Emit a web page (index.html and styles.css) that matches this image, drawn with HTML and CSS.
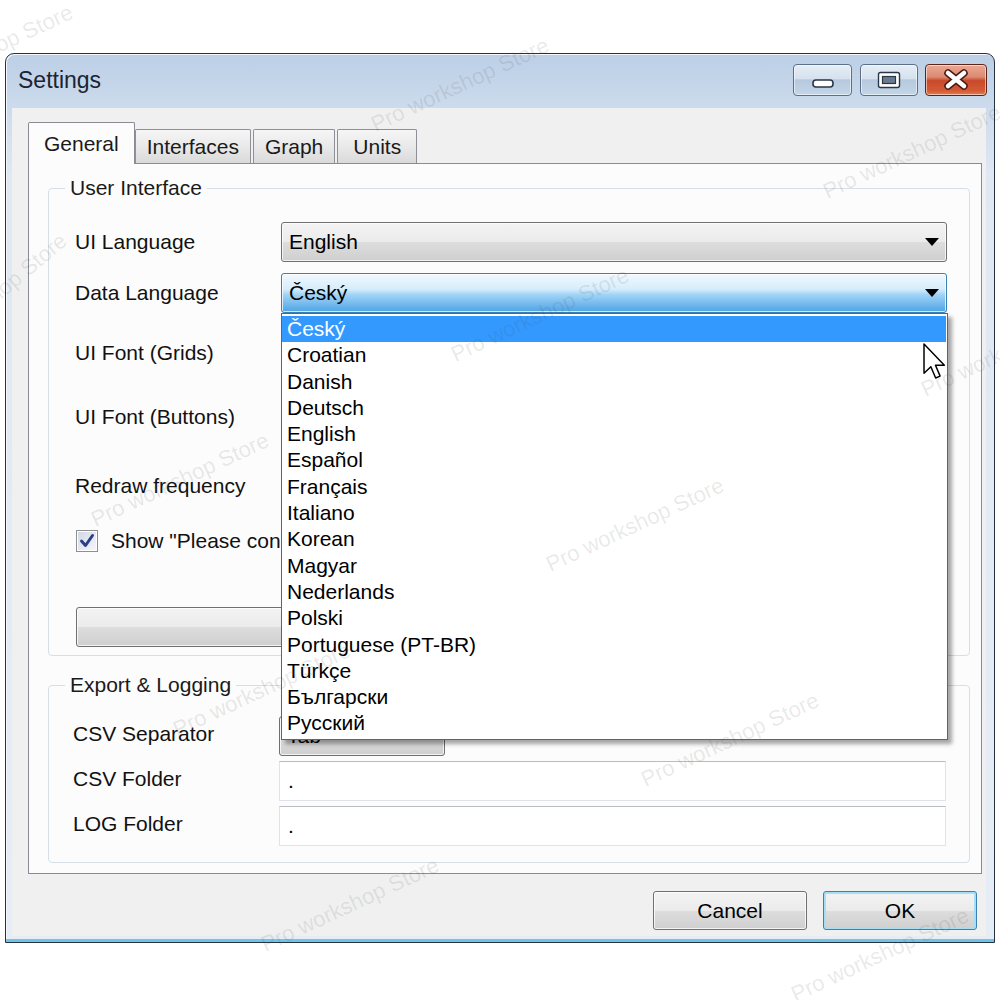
FILE: index.html
```html
<!doctype html>
<html>
<head>
<meta charset="utf-8">
<title>Settings</title>
<link rel="stylesheet" href="styles.css">
</head>
<body>
<div class="window">
	<div class="titlebar">
		<span class="title">Settings</span>
		<div class="caption-btns">
			<span class="cbtn min">
				<svg width="59" height="32" viewBox="0 0 59 32"><rect x="20" y="16" width="20" height="7" rx="3" fill="#fff" stroke="#2a3746" stroke-width="1.6"/></svg>
			</span>
			<span class="cbtn max">
				<svg width="58" height="32" viewBox="0 0 58 32"><rect x="18.5" y="8.5" width="21" height="15" rx="2" fill="#fff" stroke="#2a3746" stroke-width="1.4"/><rect x="22.5" y="12.5" width="13" height="7" fill="#6b7a8c" stroke="#2a3746" stroke-width="1.2"/></svg>
			</span>
			<span class="cbtn close">
				<svg width="62" height="32" viewBox="0 0 62 32"><path d="M23 9 L39 22 M39 9 L23 22" stroke="#4a1a10" stroke-width="7.5" stroke-linecap="round"/><path d="M23 9 L39 22 M39 9 L23 22" stroke="#fff" stroke-width="4.5" stroke-linecap="round"/></svg>
			</span>
		</div>
	</div>
	<div class="client">
		<ul class="tabs">
			<li class="on">General</li>
			<li>Interfaces</li>
			<li>Graph</li>
			<li>Units</li>
		</ul>
		<div class="tabpage">
			<div class="group">
				<div class="legend">User Interface</div>
				<div class="rows ui-rows">
					<div class="row"><label>UI Language</label><div class="combo"><span>English</span><i class="arrow"></i></div></div>
					<div class="row"><label>Data Language</label>
						<div class="cell">
							<div class="combo hot"><span>Český</span><i class="arrow"></i></div>
							<ul class="droplist">
								<li class="sel">Český</li>
								<li>Croatian</li>
								<li>Danish</li>
								<li>Deutsch</li>
								<li>English</li>
								<li>Español</li>
								<li>Français</li>
								<li>Italiano</li>
								<li>Korean</li>
								<li>Magyar</li>
								<li>Nederlands</li>
								<li>Polski</li>
								<li>Portuguese (PT-BR)</li>
								<li>Türkçe</li>
								<li>Български</li>
								<li>Русский</li>
							</ul>
							<svg class="cursor" width="26" height="37" viewBox="0 0 12 20"><path d="M0.6 0.6 L0.6 16.4 L4.3 12.8 L6.9 18.9 L9.3 17.9 L6.8 12 L11.6 12 Z" fill="#fff" stroke="#000" stroke-width="0.8" stroke-linejoin="round"/></svg>
						</div>
					</div>
					<div class="row"><label>UI Font (Grids)</label></div>
					<div class="row"><label>UI Font (Buttons)</label></div>
					<div class="row"><label>Redraw frequency</label></div>
					<div class="row">
						<span class="checkbox"><svg width="20" height="20" viewBox="0 0 20 20"><path d="M4.5 10 L8.5 14.5 L15.5 4.5" fill="none" stroke="#2c3f86" stroke-width="3" stroke-linecap="round" stroke-linejoin="round"/></svg></span>
						<span class="check-text">Show "Please connect" message</span>
					</div>
					<div class="row btn-row"><span class="wide-btn"></span></div>
				</div>
			</div>
			<div class="group export">
				<div class="legend">Export &amp; Logging</div>
				<div class="rows export-rows">
					<div class="row"><label>CSV Separator</label><div class="combo small"><span>Tab</span><i class="arrow"></i></div></div>
					<div class="row"><label>CSV Folder</label><div class="textbox">.</div></div>
					<div class="row"><label>LOG Folder</label><div class="textbox">.</div></div>
				</div>
			</div>
		</div>
		<div class="footer">
			<span class="btn">Cancel</span>
			<span class="btn ok">OK</span>
		</div>
	</div>
</div>

<div class="marks">
	<span class="m1">Pro workshop Store</span>
	<span class="m2">Pro workshop Store</span>
	<span class="m3">Pro workshop Store</span>
	<span class="m4">Pro workshop Store</span>
	<span class="m5">Pro workshop Store</span>
	<span class="m6">Pro workshop Store</span>
	<span class="m7">Pro workshop Store</span>
	<span class="m8">Pro workshop Store</span>
	<span class="m9">Pro workshop Store</span>
	<span class="m10">Pro workshop Store</span>
	<span class="m11">Pro workshop Store</span>
	<span class="m12">Pro workshop Store</span>
</div>
</body>
</html>
```

FILE: styles.css
```css
html, body { margin:0; padding:0; overflow:hidden;}
body { width:1000px; height:1000px; background:#fff; font-family:"Liberation Sans", Arial, sans-serif; font-size:21px; color:#111; position:relative;}
ul { margin:0; padding:0; list-style:none;}

/* window frame */
.window { box-sizing:border-box; width:990px; height:890px; margin:53px 0 0 5px; padding:0 8px 6px 6px; border:1px solid #26323f; border-radius:9px 9px 0 0; background:linear-gradient(#bccfe6, #cbdaec 50px, #dfe8f3 120px, #e6edf5); box-shadow:inset 0 -3px 0 #6fc4e8, inset 1px 1px 0 #f4f8fc; display:flex; flex-direction:column;}
.titlebar { height:54px; display:flex; align-items:flex-start; flex-shrink:0;}
.title { padding:12px 0 0 6px; line-height:28px; font-size:23px; color:#1b2430;}
.caption-btns { margin:10px -1px 0 auto; display:flex;}
.cbtn { box-sizing:border-box; height:32px; border:1px solid #5b6f87; border-radius:4px; background:linear-gradient(#e6eef6 0%, #d5e1ee 45%, #b6c9de 50%, #c4d5e8 100%); box-shadow:inset 0 0 0 1px rgba(255,255,255,.55); display:flex;}
.cbtn svg { margin:-1px;}
.cbtn.min { width:59px; margin-right:8px;}
.cbtn.max { width:58px; margin-right:7px;}
.cbtn.close { width:62px; border-color:#5e2418; background:linear-gradient(#eaa896 0%, #dc8a71 40%, #c9492b 52%, #d35a34 85%, #e07a50 100%);}

/* client */
.client { flex:1; background:#f0f0f0; padding:14px 4px 6px 16px; display:flex; flex-direction:column;}

.tabs { display:flex; align-items:flex-end; height:42px; margin-bottom:-1px; position:relative; z-index:1;}
.tabs li { box-sizing:border-box; height:34px; margin:0 0 1px 2px; padding:0 11px; line-height:33px; border:1px solid #8d9097; border-bottom:none; border-radius:2px 2px 0 0; background:linear-gradient(#f6f6f6, #e9e9e9 50%, #dadada); color:#1a1a1a;}
.tabs li.on { height:42px; margin:0; padding:0 15px; line-height:41px; background:#fcfcfc; border-color:#898c95;}
.tabs li.on + li { margin-left:0;}
.tabs li:last-child { padding:0 15px;}

.tabpage { border:1px solid #898c95; background:#fcfcfc; padding:0 11px 10px 19px;}

.group { margin-top:24px; border:1px solid #d5dfe5; border-radius:4px;}
.group.export { margin-top:29px;}
.legend { width:max-content; margin:-13px 0 0 16px; padding:0 5px; line-height:24px; background:#fcfcfc; color:#1a1a1a;}

.rows { display:grid;}
.ui-rows { padding:22px 22px 8px 26px; grid-template-rows:40px 62px 58px 70px 68px 42px 85px;}
.export-rows { padding:19px 23px 16px 24px; grid-template-rows:40px 40px 40px; row-gap:5px;}
.row { display:flex; align-items:center;}
.row label { width:206px; flex-shrink:0;}
.export-rows label { padding-bottom:5px;}
.btn-row { align-items:flex-end;}

.cell { flex:1; position:relative;}

.combo { box-sizing:border-box; flex:1; height:40px; display:flex; align-items:center; padding:0 7px 0 7px; border:1px solid #707070; border-radius:3px; background:linear-gradient(#f3f3f3 0%, #ebebeb 50%, #dddddd 51%, #cfcfcf 100%); box-shadow:inset 0 0 0 1px rgba(255,255,255,.75); color:#000;}
.combo span { flex:1;}
.combo.hot { border-color:#3c7fb1; background:linear-gradient(#f1f8fe 0%, #d6edfc 40%, #9fd3f7 55%, #4ea3e4 100%);}
.combo.small { flex:none; width:166px;}
.arrow { width:0; height:0; border-left:7px solid transparent; border-right:7px solid transparent; border-top:8px solid #000;}

.droplist { position:absolute; left:0; top:40px; width:667px; box-sizing:border-box; padding:2px 1px 2px 0; border:1px solid #646464; background:#fff; box-shadow:4px 4px 4px rgba(0,0,0,.35); z-index:5;}
.droplist li { line-height:26.3px; padding-left:5px; color:#000; white-space:nowrap;}
.droplist li.sel { background:#3399ff; color:#fff;}
.cursor { position:absolute; left:640px; top:70px; z-index:6;}

.checkbox { box-sizing:border-box; width:22px; height:22px; margin-left:1px; border:1px solid #8e8f8f; background:linear-gradient(135deg, #cfd6e6, #f7f8fb); box-shadow:inset 0 0 0 1px #fff; display:flex; align-items:center; justify-content:center;}
.check-text { margin-left:13px; white-space:nowrap;}

.wide-btn { box-sizing:border-box; width:520px; height:40px; margin-left:1px; border:1px solid #707070; border-radius:3px; background:linear-gradient(#f3f3f3 0%, #ebebeb 50%, #dddddd 51%, #cfcfcf 100%); box-shadow:inset 0 0 0 1px rgba(255,255,255,.75);}

.textbox { box-sizing:border-box; flex:1; height:40px; line-height:38px; padding-left:8px; border:1px solid #e2e3ea; border-top-color:#b9bcc4; background:#fff; color:#000;}

/* bottom buttons */
.footer { margin:17px 5px 0 0; display:flex; justify-content:flex-end;}
.btn { box-sizing:border-box; width:154px; height:39px; line-height:37px; text-align:center; border:1px solid #707070; border-radius:3px; background:linear-gradient(#f3f3f3 0%, #ebebeb 50%, #dddddd 51%, #cfcfcf 100%); box-shadow:inset 0 0 0 1px rgba(255,255,255,.75); color:#000;}
.btn.ok { margin-left:16px; border-color:#3c7fb1; box-shadow:inset 0 0 0 2px #a6def5;}

/* watermark over the screenshot */
.marks { position:absolute; left:0; top:0; width:1000px; height:1000px; overflow:hidden; pointer-events:none; z-index:20;}
.marks span { position:absolute; font-size:22px; white-space:nowrap; color:rgba(80,80,80,.13); transform:translate(-50%,-50%) rotate(-25deg);}
.m1 { left:-16px; top:52px;}
.m2 { left:460px; top:85px;}
.m3 { left:912px; top:152px;}
.m4 { left:-10px; top:300px; transform:translate(-50%,-50%) rotate(-40deg) !important;}
.m5 { left:540px; top:315px;}
.m6 { left:1010px; top:350px;}
.m7 { left:180px; top:480px;}
.m8 { left:635px; top:525px;}
.m9 { left:262px; top:690px;}
.m10 { left:730px; top:740px;}
.m11 { left:350px; top:905px;}
.m12 { left:880px; top:955px;}
```
